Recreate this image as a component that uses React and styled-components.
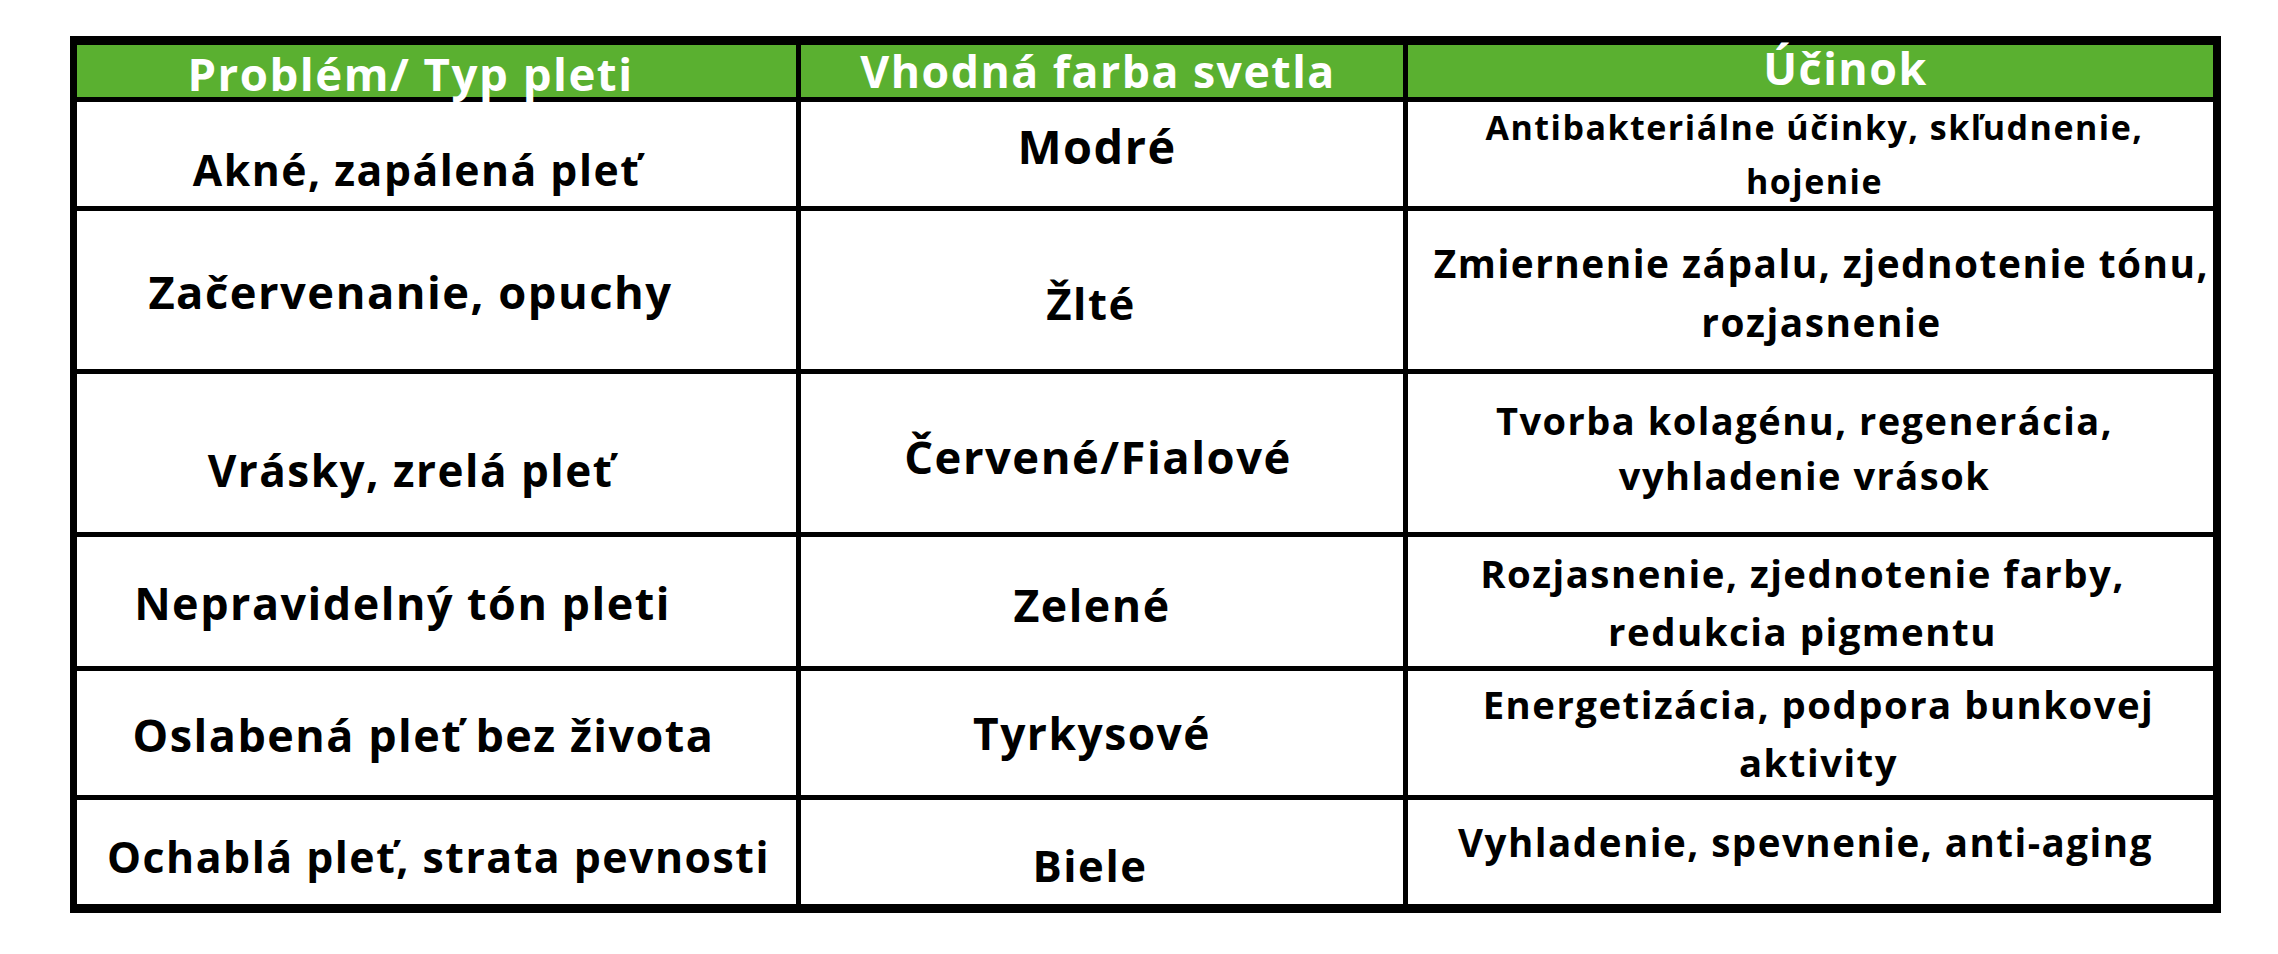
import React from "react";
import styled, { createGlobalStyle } from "styled-components";

const GlobalStyle = createGlobalStyle`
  html, body {
    margin: 0;
    padding: 0;
    background: #fff;
  }
  body {
    font-family: "Open Sans", "Liberation Sans", sans-serif;
  }
`;

const Page = styled.div`
  padding: 36px 0 0 70px;
`;

const Table = styled.div`
  display: grid;
  width: fit-content;
  grid-template-columns: 719px 602px 805px;
  grid-template-rows: 52px 104px 158px 158px 129px 124px 104px;
  gap: 5px;
  background: #000;
  border-style: solid;
  border-color: #000;
  border-width: 9px 8px 9px 7px;
`;

const Cell = styled.div`
  display: flex;
  flex-direction: column;
  align-items: center;
  min-width: 0;
  background: ${(p) => (p.$head ? "#5ab030" : "#fff")};
  color: ${(p) => (p.$head ? "#fff" : "#000")};
  text-align: center;
  padding-left: ${(p) => Math.max(0, p.$dx * 2)}px;
  padding-right: ${(p) => Math.max(0, -p.$dx * 2)}px;
`;

const Text = styled.div`
  margin-top: ${(p) => p.$top}px;
  font-size: ${(p) => p.$size}px;
  line-height: ${(p) => (p.$lh ? `${p.$lh}px` : 1.2)};
  font-weight: 700;
  letter-spacing: 1.5px;
  white-space: nowrap;
`;

// [text, fontSize, marginTop, shiftX, lineHeight]
const header = [
  ["Problém/ Typ pleti", 45.6, 1, -26],
  ["Vhodná farba svetla", 44.6, -1, -4],
  ["Účinok", 44.8, -4, 35],
];

const rows = [
  [
    ["Akné, zapálená pleť", 42.7, 41.8, -20],
    ["Modré", 46.8, 15.8, -5],
    [["Antibakteriálne účinky, skľudnenie,", "hojenie"], 34, -2.5, 4, 54],
  ],
  [
    ["Začervenanie, opuchy", 45.3, 54.2, -26],
    ["Žlté", 43.7, 65.8, -11],
    [["Zmiernenie zápalu, zjednotenie tónu,", "rozjasnenie"], 38.8, 22.5, 11, 59],
  ],
  [
    ["Vrásky, zrelá pleť", 44, 69.5, -26],
    ["Červené/Fialové", 45.4, 55.1, -4],
    [["Tvorba kolagénu, regenerácia,", "vyhladenie vrások"], 38, 18.5, -6, 55],
  ],
  [
    ["Nepravidelný tón pleti", 44.9, 38.6, -34],
    ["Zelené", 44.7, 40.8, -10],
    [["Rozjasnenie, zjednotenie farby,", "redukcia pigmentu"], 38.4, 7.1, -8, 58],
  ],
  [
    ["Oslabená pleť bez života", 44.9, 36.6, -13],
    ["Tyrkysové", 44.3, 36.2, -10],
    [["Energetizácia, podpora bunkovej", "aktivity"], 38.3, 4.1, 8, 58],
  ],
  [
    ["Ochablá pleť, strata pevnosti", 42.8, 30.7, 2],
    ["Biele", 43.6, 38.9, -12],
    ["Vyhladenie, spevnenie, anti-aging", 38.5, 19, -5],
  ],
];

const renderCell = ([text, size, top, dx, lh], key, head) => (
  <Cell key={key} $head={head} $dx={dx}>
    <Text $size={size} $top={top} $lh={lh}>
      {Array.isArray(text)
        ? text.map((line, i) => (
            <React.Fragment key={i}>
              {i > 0 && <br />}
              {line}
            </React.Fragment>
          ))
        : text}
    </Text>
  </Cell>
);

export default function App() {
  return (
    <Page>
      <GlobalStyle />
      <Table>
        {header.map((c, i) => renderCell(c, "h" + i, true))}
        {rows.map((row, r) => row.map((c, i) => renderCell(c, r + "-" + i, false)))}
      </Table>
    </Page>
  );
}
